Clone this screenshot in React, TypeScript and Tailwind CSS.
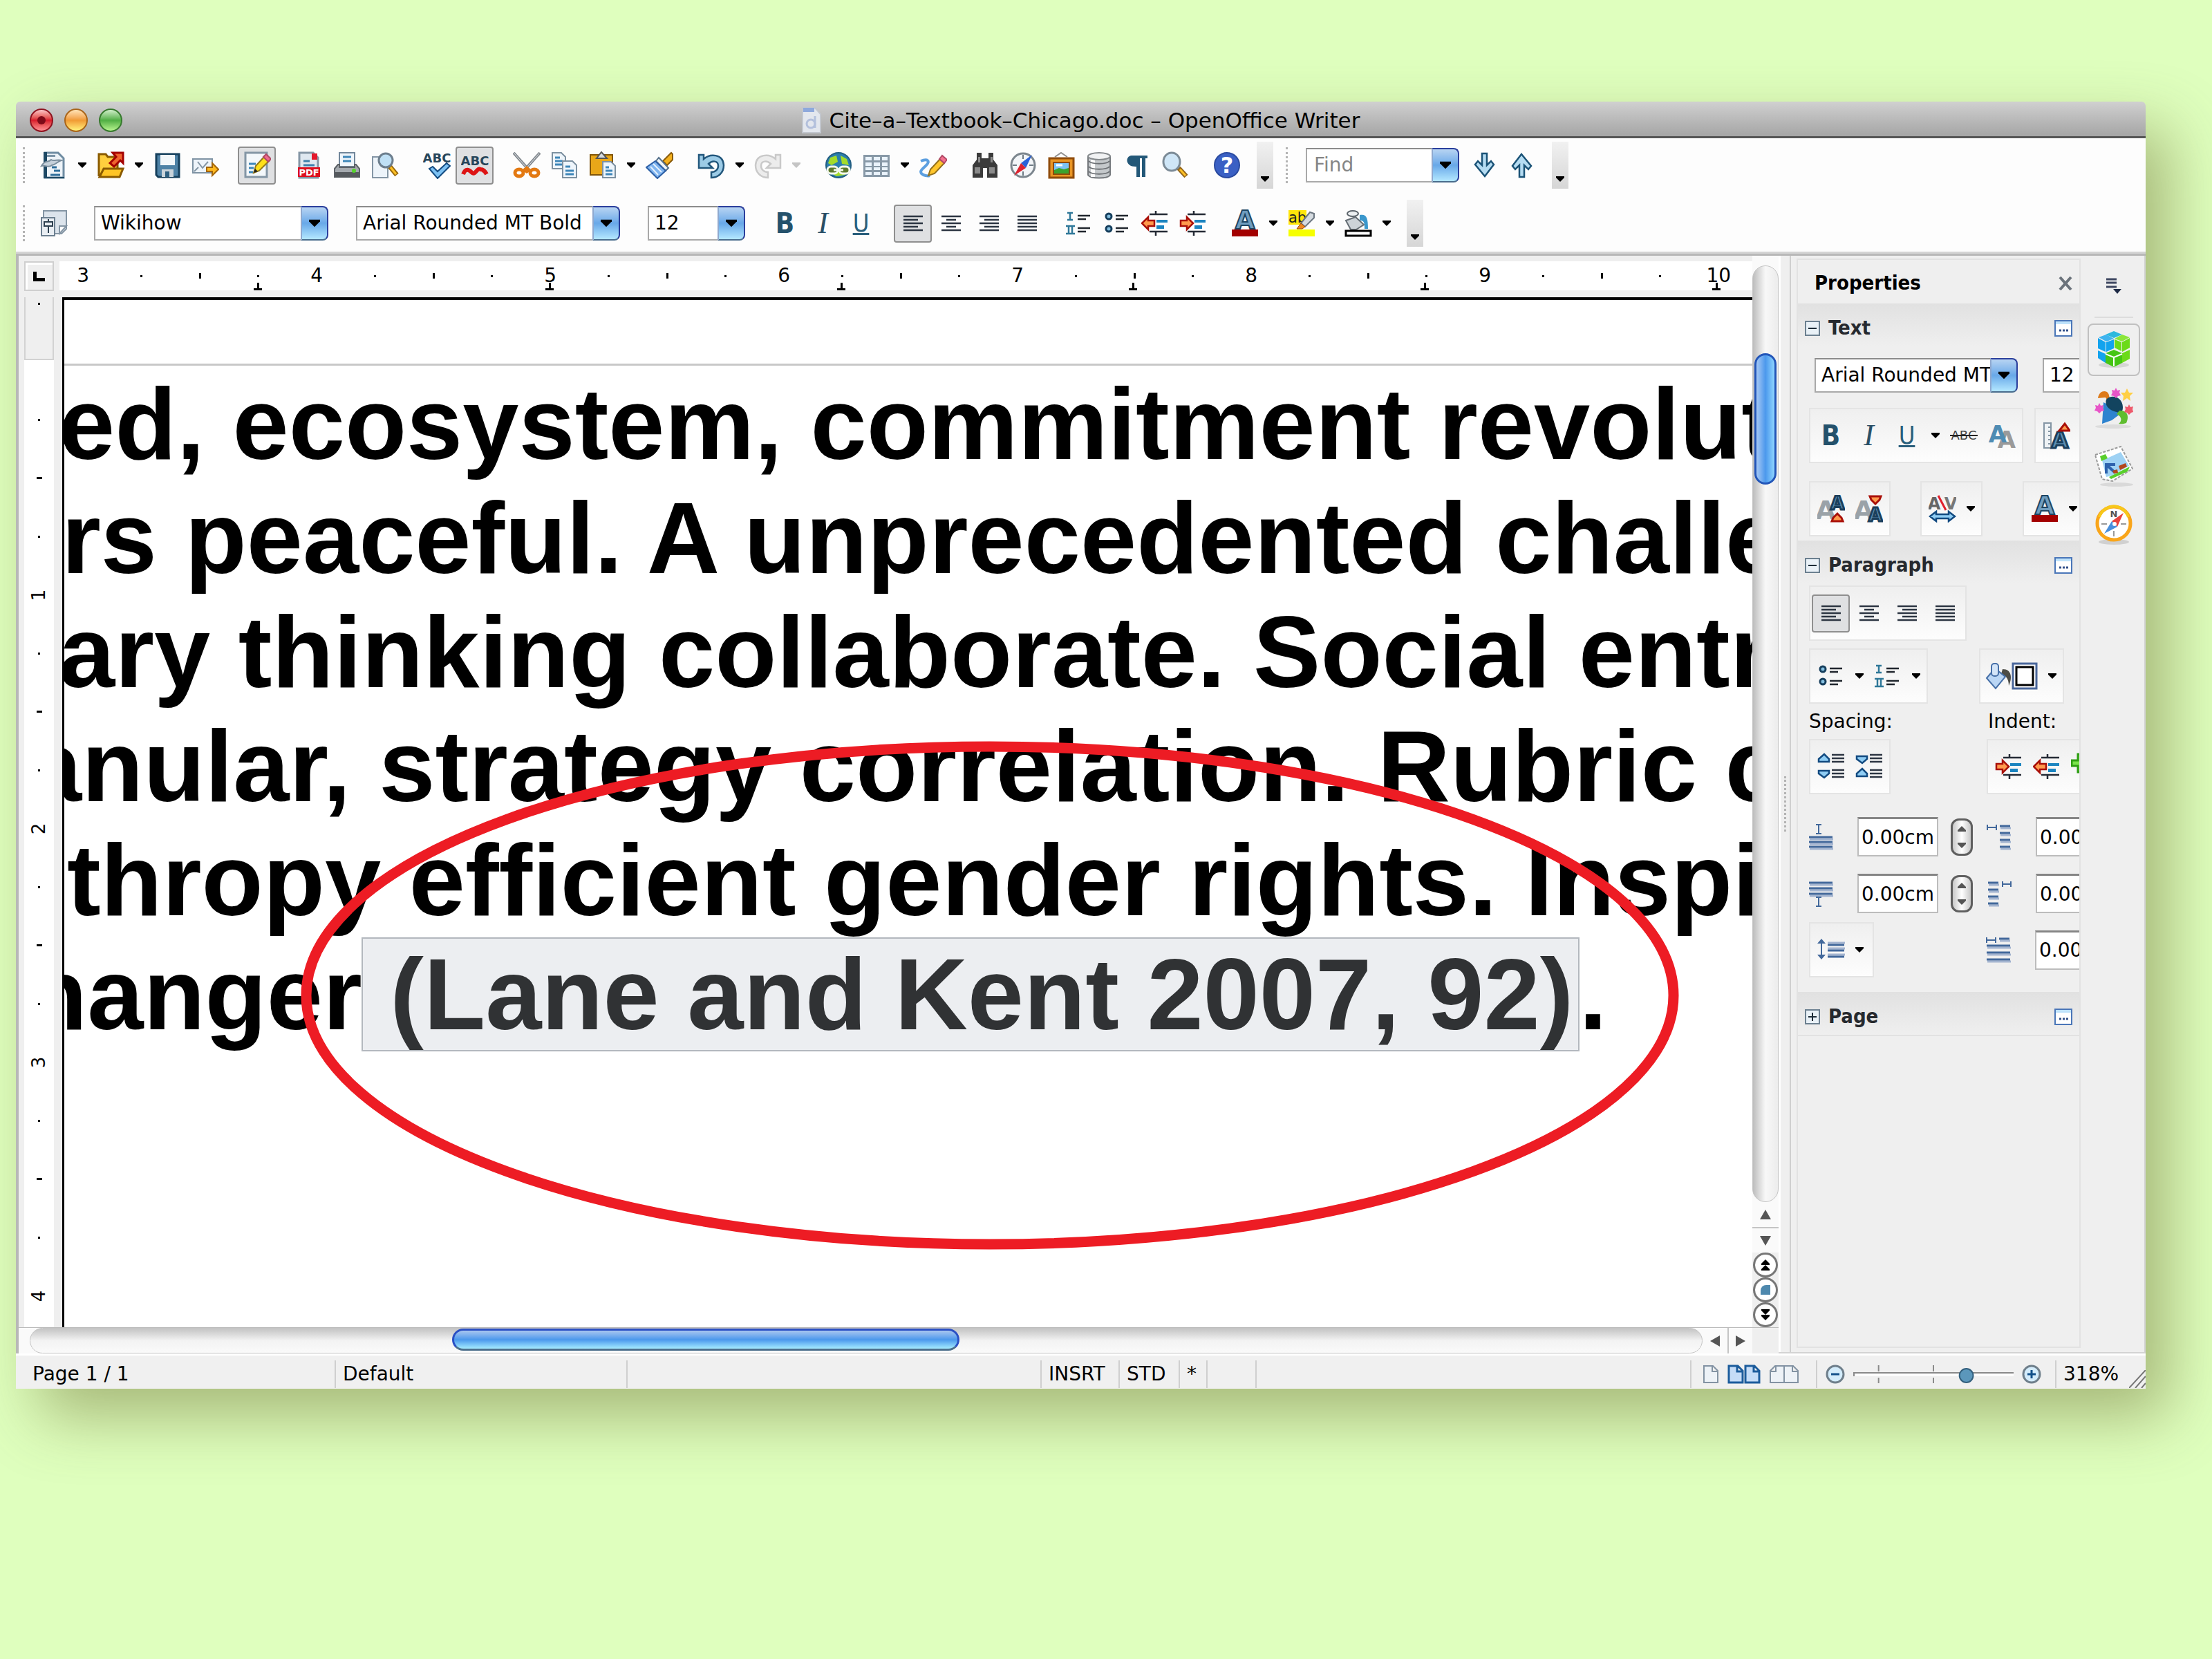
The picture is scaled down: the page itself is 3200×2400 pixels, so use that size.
import React from "react";
import clsx from "clsx";

type Children = { children?: React.ReactNode };

const Icon = ({ children, className }: Children & { className?: string }) => (
  <svg viewBox="0 0 40 40" className={clsx("size-10 shrink-0", className)} aria-hidden="true">
    {children}
  </svg>
);

/* ---------- toolbar icons ---------- */

const NewDocIcon = () => (
  <Icon>
    <path d="M7 2h19l8 8v28H7z" fill="#edf3f8" stroke="#6f8ca2" strokeWidth="3" />
    <path d="M5 1h5v38H5zM5 37h30v2H5z" fill="#1d4864" />
    <path d="M10 5h12v3H10z" fill="#7d95a8" />
    <path d="M2 21c5-9 9-4 14-9 4 3 9-1 15 1-5 1-8 6-14 7-5 5-9-1-15 1z" fill="#c5d0da" stroke="#7b8e9d" strokeWidth="2" />
    <path d="M17 23h7M20 28h9M15 34h14" stroke="#2c6c99" strokeWidth="3" />
  </Icon>
);
const OpenIcon = () => (
  <Icon>
    <path d="M3 36V4h10l3 4h14v16" fill="#ffcf3e" stroke="#8a5a00" strokeWidth="3" />
    <path d="M4 37l6-12h28l-5 12z" fill="#ffc526" stroke="#8a5a00" strokeWidth="3" />
    <path d="M23 2h15v15l-4-4-9 9-6-5 9-9z" fill="#f0642e" stroke="#a30000" strokeWidth="3" />
  </Icon>
);
const SaveIcon = () => (
  <Icon>
    <path d="M4 4h33v33H7l-3-3z" fill="#4e82a6" stroke="#153f5c" strokeWidth="3" />
    <path d="M10 5h21v15H10z" fill="#f2f7fa" />
    <path d="M12 26h17v11H12z" fill="#c9d3da" />
    <path d="M17 29h6v8h-6z" fill="#2d5f80" />
  </Icon>
);
const MailIcon = () => (
  <Icon>
    <path d="M2 11h28v20H2z" fill="#eef4fa" stroke="#7f93a4" strokeWidth="2" />
    <path d="M9 15l7 9 8-9M4 29l6-6M28 29l-5-5" fill="none" stroke="#8496a5" strokeWidth="2" />
    <path d="M22 23h8v-6l9 9-9 9v-6h-8z" fill="#ffb81e" stroke="#a3650a" strokeWidth="2" />
  </Icon>
);
const EditIcon = () => (
  <Icon>
    <path d="M3 2h31v35H3z" fill="#f4f8fb" stroke="#8496a5" strokeWidth="3" />
    <path d="M8 18h10M8 24h7M8 30h6" stroke="#3d86b8" strokeWidth="3" />
    <path d="M15 31l3-10 12-13 7 6-14 14z" fill="#ffe01a" stroke="#93791c" strokeWidth="2" />
    <path d="M29 8l4-4 7 7-4 4z" fill="#f06a8f" stroke="#b04a66" strokeWidth="2" />
    <path d="M15 31l2-6 4 4z" fill="#222" />
  </Icon>
);
const PdfIcon = () => (
  <Icon>
    <path d="M6 2h20l7 7v29H6z" fill="#dfe8f0" stroke="#8496a5" strokeWidth="3" />
    <path d="M24 3h8v9h-8z" fill="#e5182c" />
    <path d="M12 14h9M12 20h16" stroke="#3d7fab" strokeWidth="3" />
    <path d="M4 23h32v14H4z" fill="#dd1020" />
    <text x="20" y="35" textAnchor="middle" fontSize="13" fontWeight="700" fill="#fff">PDF</text>
  </Icon>
);
const PrintIcon = () => (
  <Icon>
    <path d="M9 2h22v20H9z" fill="#eef5fb" stroke="#71869a" strokeWidth="2" />
    <path d="M14 8h12M14 14h12" stroke="#3d86b8" strokeWidth="3" />
    <path d="M2 25l5-6h2v4h22v-4h2l5 6v12H2z" fill="#a4a9ae" stroke="#5c6166" strokeWidth="2" />
    <path d="M3 30h34v7H3z" fill="#55595d" />
    <circle cx="30" cy="28" r="3" fill="#55d32c" />
  </Icon>
);
const PreviewIcon = () => (
  <Icon>
    <path d="M2 8h22v30H2z" fill="#edf4fa" stroke="#8496a5" strokeWidth="2" />
    <path d="M27 22l10 12" stroke="#9b6a0d" strokeWidth="7" />
    <path d="M28 23l8 10" stroke="#ffc126" strokeWidth="3" />
    <circle cx="21" cy="13" r="10" fill="#bfe0f5" stroke="#6d7f8e" strokeWidth="3" />
  </Icon>
);
const SpellIcon = () => (
  <Icon>
    <text x="20" y="16" textAnchor="middle" fontSize="18" fontWeight="700" fill="#28465a">ABC</text>
    <path d="M9 25l5-3 7 7 13-12 5 4-18 18z" fill="#7cc1f3" stroke="#124a80" strokeWidth="2" />
  </Icon>
);
const AutoSpellIcon = () => (
  <Icon>
    <text x="20" y="20" textAnchor="middle" fontSize="18" fontWeight="700" fill="#28465a">ABC</text>
    <path d="M3 33c4-10 9-6 13-2 5 4 7-8 12-5 4 0 6 2 9 7" fill="none" stroke="#dd1414" strokeWidth="6" />
  </Icon>
);
const CutIcon = () => (
  <Icon>
    <path d="M1 2l24 27M39 2L15 29" stroke="#83898f" strokeWidth="4" />
    <path d="M2 3l20 23M38 3L18 26" stroke="#dfe3e7" strokeWidth="1" />
    <ellipse cx="9" cy="31" rx="6" ry="5" fill="#fff" stroke="#e37912" strokeWidth="5" />
    <ellipse cx="31" cy="31" rx="6" ry="5" fill="#fff" stroke="#e37912" strokeWidth="5" />
    <path d="M13 27l7-6 7 6-7 5z" fill="#e37912" />
  </Icon>
);
const CopyIcon = () => (
  <Icon>
    <path d="M2 2h13l6 6v17H2z" fill="#eef5fb" stroke="#7d91a1" strokeWidth="2" />
    <path d="M6 9h7M6 14h11M6 19h11" stroke="#3d86b8" strokeWidth="3" />
    <path d="M17 14h14l6 6v18H17z" fill="#eef5fb" stroke="#7d91a1" strokeWidth="2" />
    <path d="M21 22h7M21 28h12M21 33h12" stroke="#3d86b8" strokeWidth="3" />
  </Icon>
);
const PasteIcon = () => (
  <Icon>
    <path d="M2 5h32v29H2z" fill="#e9a719" stroke="#80550a" strokeWidth="2" />
    <path d="M11 10l7-9 8 9z" fill="#d5dade" stroke="#555" strokeWidth="2" />
    <path d="M20 15h12l6 6v17H20z" fill="#eef5fb" stroke="#7d91a1" strokeWidth="2" />
    <path d="M24 23h5M24 28h10M24 33h10" stroke="#3d86b8" strokeWidth="3" />
  </Icon>
);
const BrushIcon = () => (
  <Icon>
    <path d="M25 14L37 2l2 2v8l-8 8z" fill="#f3b01e" stroke="#8a5b0b" strokeWidth="2" />
    <path d="M19 9l14 15-4 4L15 14z" fill="#f1f5f8" stroke="#55708a" strokeWidth="2" />
    <path d="M14 14l15 14-12 11L1 23z" fill="#7fb4ef" stroke="#2d5fa5" strokeWidth="2" />
    <path d="M7 22l11 12M11 18l12 12" stroke="#e3f0fd" strokeWidth="2" />
  </Icon>
);
const UndoIcon = ({ muted = false }: { muted?: boolean }) => (
  <Icon className={muted ? "-scale-x-100" : undefined}>
    <path
      d="M2 5h7v6C18 3 37 3 38 20c0 11-8 18-18 18v-8c6 0 10-4 10-9 0-8-9-8-14-3l6 6H2z"
      fill={muted ? "#ececec" : "#9ccbe6"}
      stroke={muted ? "#c9c9c9" : "#22577c"}
      strokeWidth="2.5"
    />
  </Icon>
);
const GlobeIcon = () => (
  <Icon>
    <circle cx="20" cy="20" r="18" fill="#2b7fae" stroke="#245f83" strokeWidth="2" />
    <path d="M8 9l9-3 2 9-9 5-5-3zM23 6l9 5 3 9-10-2zM9 31l8 5 13-2-5-6z" fill="#a4dc2a" />
    <rect x="4" y="22" width="15" height="10" rx="5" fill="#5d7a2c" stroke="#f5f8ee" strokeWidth="3" />
    <rect x="21" y="22" width="15" height="10" rx="5" fill="#5d7a2c" stroke="#f5f8ee" strokeWidth="3" />
    <path d="M13 27h14" stroke="#f5f8ee" strokeWidth="3" />
  </Icon>
);
const TableIcon = () => (
  <Icon>
    <path d="M1 5h38v32H1z" fill="#8899a7" />
    <path d="M4 8h9v5H4zM16 8h9v5h-9zM28 8h8v5h-8zM4 16h9v5H4zM16 16h9v5h-9zM28 16h8v5h-8zM4 23h9v4H4zM16 23h9v4h-9zM28 23h8v4h-8zM4 30h9v4H4zM16 30h9v4h-9zM28 30h8v4h-8z" fill="#eaf3fb" />
  </Icon>
);
const DrawIcon = () => (
  <Icon>
    <path d="M2 14c10-4 14 0 8 6-5 5-10 8-7 12 3 3 9 4 12 3" fill="none" stroke="#5c9fe0" strokeWidth="4" />
    <path d="M13 35l3-9 14-15 6 6-14 15z" fill="#ffc62b" stroke="#93701c" strokeWidth="2" />
    <path d="M29 11l4-5 7 6-4 5z" fill="#f4708f" stroke="#b04a66" strokeWidth="2" />
  </Icon>
);
const BinocularsIcon = () => (
  <Icon>
    <path d="M8 2h7v8h10V2h7v10l6 8v18H23V24h-6v14H2V20l6-8z" fill="#3b3b3b" />
    <path d="M5 23h8v9H5zM26 23h8v9h-8zM10 8h3v8h-3zM28 8h3v8h-3z" fill="#8b8b8b" />
  </Icon>
);
const CompassIcon = () => (
  <Icon>
    <circle cx="20" cy="20" r="17" fill="#f2f5f8" stroke="#7c868e" strokeWidth="3" />
    <path d="M20 5v6M20 29v6M5 20h6M29 20h6" stroke="#6e7a84" strokeWidth="2" />
    <path d="M33 5L24 24l-7-7z" fill="#2a62d8" />
    <path d="M7 35l17-11-7-7z" fill="#dd2430" />
  </Icon>
);
const GalleryIcon = () => (
  <Icon>
    <path d="M11 8l9-6 9 6" fill="none" stroke="#8f8f8f" strokeWidth="2" />
    <path d="M3 10h35v28H3z" fill="#e99524" stroke="#8f4b0a" strokeWidth="3" />
    <path d="M9 16h23v17H9z" fill="#7dc2f5" stroke="#8f4b0a" strokeWidth="2" />
    <path d="M10 27l7-3 7 2 7-2v8H10z" fill="#3aa32e" />
    <path d="M13 20h9" stroke="#fff" strokeWidth="3" />
  </Icon>
);
const DatabaseIcon = () => (
  <Icon>
    <path d="M4 7v27c3 6 29 6 32 0V7z" fill="#c4c8cb" stroke="#75797d" strokeWidth="2" />
    <path d="M11 12v25" stroke="#fafafa" strokeWidth="6" />
    <path d="M5 14c4 5 26 5 30 0M5 22c4 5 26 5 30 0M5 29c4 5 26 5 30 0" fill="none" stroke="#6c7074" strokeWidth="2" />
    <ellipse cx="20" cy="7" rx="16" ry="5" fill="#f1f2f3" stroke="#85898c" strokeWidth="2" />
  </Icon>
);
const PilcrowIcon = () => (
  <Icon>
    <path d="M12 6h23v4h-3v27h-5V10h-3v27h-5V22C3 23 2 7 12 6z" fill="#235878" />
  </Icon>
);
const MagnifierIcon = () => (
  <Icon>
    <path d="M25 24l11 12" stroke="#94661a" strokeWidth="7" />
    <path d="M27 26l8 9" stroke="#ffc126" strokeWidth="3" />
    <ellipse cx="15" cy="15" rx="12" ry="13" fill="#cfe6f7" stroke="#7c8b97" strokeWidth="3" />
  </Icon>
);
const HelpIcon = () => (
  <Icon>
    <circle cx="20" cy="20" r="18" fill="#3a60c4" stroke="#2b4ba0" strokeWidth="2" />
    <text x="20" y="31" textAnchor="middle" fontSize="32" fontWeight="700" fill="#fff">?</text>
  </Icon>
);
const ArrowIcon = ({ up = false }: { up?: boolean }) => (
  <Icon className={up ? "rotate-180" : undefined}>
    <path d="M17 3h7v17l6-6 4 5-13 17L7 19l4-5 6 6z" fill="#b5dcf2" stroke="#1b5377" strokeWidth="2.5" />
  </Icon>
);
const StylesIcon = () => (
  <Icon>
    <path d="M5 2h33v26l-7 7H5z" fill="#dce4ec" stroke="#8495a4" strokeWidth="2" />
    <path d="M28 35V24h10z" fill="#fff" stroke="#8495a4" strokeWidth="2" />
    <path d="M2 12h19v26H2z" fill="#e9eef3" stroke="#6c7f90" strokeWidth="2" />
    <path d="M6 18h12v6H6zM12 24v10M12 14v4" fill="none" stroke="#2d4050" strokeWidth="2" />
  </Icon>
);

/* ---------- formatting icons ---------- */

const alignLines = {
  left: "M6 10h28M6 15h21M6 20h28M6 25h21M6 30h28",
  center: "M6 10h28M13 15h14M6 20h28M13 25h14M6 30h28",
  right: "M6 10h28M13 15h21M6 20h28M13 25h21M6 30h28",
  justify: "M6 10h28M6 15h28M6 20h28M6 25h28M6 30h28",
};
const AlignIcon = ({ side }: { side: keyof typeof alignLines }) => (
  <Icon>
    <path d={alignLines[side]} stroke="#2c3542" strokeWidth="2.5" />
  </Icon>
);
const NumberListIcon = () => (
  <Icon>
    <path d="M18 9h18M18 14h12M18 27h18M18 32h12" stroke="#20262e" strokeWidth="2.5" />
    <path d="M3 5h8M7 5v10M3 15h8M1 24h13M5 24v11M10 24v11M1 35h13" stroke="#2f7899" strokeWidth="2.5" />
  </Icon>
);
const BulletListIcon = () => (
  <Icon>
    <path d="M18 9h18M18 14h12M18 27h18M18 32h12" stroke="#20262e" strokeWidth="2.5" />
    <circle cx="8" cy="10" r="4" fill="#84bfe0" stroke="#163f5d" strokeWidth="3" />
    <circle cx="8" cy="28" r="4" fill="#84bfe0" stroke="#163f5d" strokeWidth="3" />
  </Icon>
);
const IndentIcon = ({ out = false }: { out?: boolean }) => (
  <Icon>
    <path d="M12 7h26M12 32h26M21 2v5M21 32v6" stroke="#252b36" strokeWidth="2.5" />
    <path d="M22 15h16v4H22zM22 23h11v5H22z" fill="#1b84c0" />
    <path
      d={out ? "M1 20l9-9v5h9v8h-9v5z" : "M20 20l-9-9v5H2v8h9v5z"}
      fill="#ff9a4d"
      stroke="#a90f08"
      strokeWidth="2.5"
    />
  </Icon>
);
const SpacingIcon = ({ shrink = false }: { shrink?: boolean }) => (
  <Icon>
    <path d="M21 3h18M21 8h18M21 13h18M21 25h18M21 30h18M21 35h18" stroke="#2c3542" strokeWidth="2.5" />
    <path
      d={shrink ? "M2 5h15v4l-7 6-8-6zM2 34h15v-4l-7-7-8 7z" : "M2 13h15V9l-7-7-8 7zM2 26h15v4l-7 6-8-6z"}
      fill="#8fcdf4"
      stroke="#124a80"
      strokeWidth="2.5"
    />
  </Icon>
);
const condensed = "font-['DejaVu_Sans_Condensed','Open_Sans',sans-serif]";
const BoldIcon = () => (
  <span className={clsx(condensed, "text-[40px] leading-none font-bold text-[#24516b]")}>B</span>
);
const ItalicIcon = () => (
  <span className="font-['Liberation_Serif',serif] text-[44px] leading-none text-[#2a4f66] italic">I</span>
);
const UnderlineIcon = () => (
  <span className={clsx(condensed, "text-[36px] leading-none text-[#2a5f7c] underline")}>U</span>
);
const FontColorIcon = () => (
  <Icon>
    <text x="20" y="28" textAnchor="middle" fontSize="37" fontWeight="700" fill="#6f9dbf" stroke="#1d4562" strokeWidth="2">A</text>
    <path d="M1 29h38v10H1z" fill="#a30000" />
  </Icon>
);
const HighlightIcon = () => (
  <Icon>
    <path d="M1 1h26v21H1z" fill="#ffe60a" />
    <text x="1" y="19" fontSize="21" fill="#222">ab</text>
    <path d="M19 20L32 4l6 2v6L25 25z" fill="#d5dbe0" stroke="#6b7680" strokeWidth="2" />
    <path d="M13 28l6-8 6 5-4 3z" fill="#f08a1d" stroke="#9b4a0d" />
    <path d="M1 29h38v10H1z" fill="#f6ff00" />
  </Icon>
);
const BackgroundIcon = () => (
  <Icon>
    <path d="M22 8c10-2 12 4 12 20h-5c0-10-1-12-7-12z" fill="#3a97cc" />
    <path d="M2 16l14-5 12 11-11 7H9z" fill="#cdd3d8" stroke="#666e75" strokeWidth="2" />
    <ellipse cx="12" cy="6" rx="8" ry="4" fill="#eceff1" stroke="#5c646b" strokeWidth="2" />
    <path d="M2 31h36v7H2z" fill="#fff" stroke="#000" strokeWidth="3" />
  </Icon>
);
const StrikeIcon = () => (
  <Icon>
    <text x="20" y="26" textAnchor="middle" fontSize="18" fill="#444">ABC</text>
    <path d="M0 20h40" stroke="#222" strokeWidth="2" />
  </Icon>
);
const ShadowIcon = () => (
  <Icon>
    <text x="27" y="38" textAnchor="middle" fontSize="34" fontWeight="700" fill="#9a9a9a">A</text>
    <text x="14" y="30" textAnchor="middle" fontSize="34" fontWeight="700" fill="#4f8cb3">A</text>
  </Icon>
);
const SizeIcon = () => (
  <Icon>
    <path d="M2 2h10v36H2z" fill="#eef2f5" stroke="#8495a4" strokeWidth="2" />
    <path d="M8 8h4M8 14h4M8 20h4M8 26h4M8 32h4" stroke="#8495a4" strokeWidth="2" />
    <text x="25" y="38" textAnchor="middle" fontSize="32" fontWeight="700" fill="#5d8fb3" stroke="#1b3f5c" strokeWidth="3">A</text>
    <path d="M24 13l8-10 7 10z" fill="#ff9a4d" stroke="#a90f08" strokeWidth="3" />
  </Icon>
);
const GrowIcon = ({ down = false }: { down?: boolean }) => (
  <Icon>
    <text x="12" y="35" textAnchor="middle" fontSize="38" fontWeight="700" fill="#9aa2a8">A</text>
    <text x="29" y={down ? 38 : 21} textAnchor="middle" fontSize="26" fontWeight="700" fill="#5d8fb3" stroke="#1b3f5c" strokeWidth="3">A</text>
    <path d={down ? "M21 2h16l-2 5-6 6-6-6z" : "M21 38h16l-2-5-6-6-6 6z"} fill="#ff9a4d" stroke="#a90f08" strokeWidth="3" />
  </Icon>
);
const KerningIcon = () => (
  <Icon>
    <text x="8" y="21" textAnchor="middle" fontSize="24" fontWeight="700" fill="#666">A</text>
    <text x="32" y="21" textAnchor="middle" fontSize="24" fontWeight="700" fill="#777">V</text>
    <path d="M14 1l11 21" stroke="#e0202c" strokeWidth="3" />
    <path d="M2 31l9-7v4h18v-4l9 7-9 7v-4H11v4z" fill="#8fcdf4" stroke="#124a80" strokeWidth="2.5" />
  </Icon>
);
const FillIcon = () => (
  <svg viewBox="0 0 80 40" className="h-10 w-20 shrink-0" aria-hidden="true">
    <path d="M26 10c14 0 14 14 9 24 0-9-3-14-11-17z" fill="#4d4d47" />
    <path d="M3 23L15 9l15 12-14 17z" fill="#bad6f5" stroke="#4770a8" strokeWidth="2" />
    <rect x="10" y="2" width="10" height="18" rx="4" fill="#d4e5f8" stroke="#4770a8" strokeWidth="2" />
    <path d="M41 2h34v36H41z" fill="#fff" stroke="#4a679b" strokeWidth="3" />
    <path d="M46 7h24v26H46z" fill="#fff" stroke="#000" strokeWidth="3" />
  </svg>
);
const PlusIcon = () => (
  <Icon>
    <path d="M10 2h9v9h9v8h-9v9h-9v-9H1v-8h9z" fill="#7be34b" stroke="#2f9e14" strokeWidth="3" />
  </Icon>
);

const measurePaths = {
  above: ["M12 2h8M16 2v13M12 15h8", "M2 20h34M2 27h34M2 34h34"],
  below: ["M12 38h8M16 25v13M12 25h8", "M2 4h34M2 12h34M2 20h34"],
  before: ["M2 2v8M2 6h13M15 2v8", "M20 4h15M20 14h15M20 24h15M20 34h15"],
  after: ["M24 2v8M24 6h12M36 2v8", "M3 4h15M3 14h15M3 24h15M3 34h15"],
  first: ["M2 2v8M2 6h13M15 2v8", "M20 4h15M2 14h34M2 24h34M2 34h34"],
};
const MeasureIcon = ({ kind }: { kind: keyof typeof measurePaths }) => (
  <Icon className="-mx-0.5">
    <path d={measurePaths[kind][1]} stroke="#a3b4d0" strokeWidth="3" transform="translate(1 3)" />
    <path d={measurePaths[kind][1]} stroke="#42689b" strokeWidth="3" />
    <path d={measurePaths[kind][0]} stroke="#42689b" strokeWidth="2" />
  </Icon>
);
const LineSpacingIcon = () => (
  <Icon>
    <path d="M6 8v22" stroke="#42689b" strokeWidth="2" />
    <path d="M0 11l6-7 6 7zM0 27l6 7 6-7z" fill="#42689b" />
    <path d="M15 10h25M15 18h25M15 27h25" stroke="#a3b4d0" strokeWidth="3" />
    <path d="M15 13h24M15 21h24M15 30h24" stroke="#42689b" strokeWidth="3" />
  </Icon>
);

/* ---------- sidebar deck icons ---------- */

const CubeIcon = () => (
  <svg viewBox="0 0 48 54" className="h-[54px] w-12" aria-hidden="true">
    <ellipse cx="24" cy="49" rx="22" ry="4" fill="#d5d5d5" />
    <path d="M1 10l11 6v14L1 25zM1 28l11 5v13L1 39zM13 16l11-4v13l-11 5z" fill="#12a3ee" />
    <path d="M12 5l12-5 12 5-12 5z" fill="#2cb9dd" />
    <path d="M25 12l10 4v13l-10-5zM36 16l11-6v14l-11 6zM36 32l11-5v13l-11 6z" fill="#6bdb18" />
    <path d="M12 32l12-5 12 5v14l-12 6-12-6z" fill="#45c614" />
    <path d="M12 33l12 5 12-5M24 38v13" fill="none" stroke="#fff" strokeWidth="2" />
    <path d="M2 9l11-4 11 6-11 4z" fill="#3fb4ef" />
    <path d="M25 11l11-6 11 4-11 6z" fill="#8be63a" />
  </svg>
);
const EffectsIcon = () => (
  <svg viewBox="0 0 56 60" className="h-[60px] w-14" aria-hidden="true">
    <ellipse cx="27" cy="57" rx="26" ry="3" fill="#dcdcdc" />
    <path d="M5 16C7 3 20 4 21 12l2 9-4-1-3-5z" fill="#dd7a1a" />
    <path d="M13 22l28 14-16 12-14 5z" fill="#2d83cf" />
    <path d="M17 18c8-9 24-3 24 11 0 8-4 9-9 7-9-2-18-8-15-18z" fill="#12445f" />
    <path d="M36 34c13-1 14 10 10 18-5 2-11 1-11 1 5-4 5-10-3-14z" fill="#5fbd2f" />
    <path d="M47 2l3 6h6l-5 5 1 7-5-4-6 4 1-7-4-5h6z" fill="#ffcf45" />
    <path d="M31 1l2 4 4-1-1 4 2 4-4 1-3 3-3-3-4-1 2-4-1-4 4 1zM7 23l2 4 4-1-1 4 2 4-4 1-3 3-3-3-4-1 2-4-1-4 4 1z" fill="#e855c8" />
    <path d="M50 25l2 4 4-1-1 4 1 4-3 1-3 3-3-3-4-1 2-4-1-4 4 1z" fill="#ee5a6c" />
  </svg>
);
const PictureIcon = () => (
  <svg viewBox="0 0 56 60" className="h-[60px] w-14" aria-hidden="true">
    <ellipse cx="32" cy="57" rx="24" ry="3" fill="#d9d9d9" />
    <path d="M1 14L38 2l17 32-29 18-15-3z" fill="#fff" stroke="#9a9a9a" strokeWidth="2" strokeDasharray="4 2" />
    <path d="M11 22l27-12 12 20-25 14-8 2z" fill="#9fd2f4" />
    <path d="M8 16l8-3 3 6-9 4zM21 46l30-15-3 7-24 11z" fill="#59cf2c" />
    <path d="M17 41V28h13M17 28l13 12" fill="none" stroke="#2d62ad" strokeWidth="4" />
    <path d="M35 30l10-4 2 5-10 5zM26 37l7-2 1 5-6 1z" fill="#b2471c" />
  </svg>
);
const NavigatorIcon = () => (
  <svg viewBox="0 0 56 60" className="h-[60px] w-14" aria-hidden="true">
    <ellipse cx="28" cy="56" rx="22" ry="4" fill="#d0d0d0" />
    <circle cx="28" cy="29" r="24" fill="#fff" stroke="#f9a51a" strokeWidth="5" />
    <path d="M7 20a22 22 0 0 1 42 0" fill="none" stroke="#f7c81a" strokeWidth="4" />
    <text x="28" y="20" textAnchor="middle" fontSize="13" fontWeight="700" fill="#555">N</text>
    <path d="M10 30h8M38 30h8M28 40v8" stroke="#999" strokeWidth="2" />
    <path d="M42 14L33 34l-8-8z" fill="#e8413c" />
    <path d="M14 44l19-10-8-8z" fill="#4a8fdd" />
    <circle cx="29" cy="30" r="3" fill="#fff" />
  </svg>
);

/* ---------- small building blocks ---------- */

const Triangle = ({ className }: { className?: string }) => (
  <svg viewBox="0 0 12 8" className={clsx("h-2 w-3", className)} aria-hidden="true">
    <path d="M0 0h12v2L6 8 0 2z" fill="currentColor" />
  </svg>
);

const ScrollTriangle = ({ className }: { className?: string }) => (
  <svg viewBox="0 0 16 14" className={clsx("h-3.5 w-4", className)} aria-hidden="true">
    <path d="M0 0h16L8 14z" fill="currentColor" />
  </svg>
);

const Tool = ({ label, pressed = false, children }: Children & { label: string; pressed?: boolean }) => (
  <button
    type="button"
    aria-label={label}
    aria-pressed={pressed}
    className={clsx(
      "flex h-[55px] w-[55px] shrink-0 items-center justify-center rounded-sm border-2",
      pressed ? "border-[#8f8f8f] bg-[#dfe0e2]" : "border-transparent",
    )}
  >
    {children}
  </button>
);

const More = ({ label, muted = false }: { label: string; muted?: boolean }) => (
  <button
    type="button"
    aria-label={label}
    className={clsx("flex h-[55px] w-[27px] shrink-0 items-center justify-center", muted ? "text-[#c4c4c4]" : "text-black")}
  >
    <Triangle />
  </button>
);

const Gap = () => <div className="w-5 shrink-0" />;

const Grip = () => <div className="mr-3.5 ml-2.5 h-[52px] w-[3px] shrink-0 border-l-3 border-dotted border-[#b4b4b4]" />;

const Overflow = () => (
  <button
    type="button"
    aria-label="More controls"
    className="flex h-[68px] w-6 shrink-0 items-end justify-center bg-linear-to-b from-[#f1f1f1] to-[#d6d6d6] pb-2.5"
  >
    <Triangle />
  </button>
);

const blueButton =
  "pointer-events-none flex h-full w-10 shrink-0 items-center justify-center rounded-r-lg border-2 border-[#2b3f9c] border-l-[#8fa9cf] border-b-[#496c8c] bg-linear-to-b from-[#b8d4f2] via-[#68a8e8] to-[#b4e8ff] text-black";

const Combo = ({ label, value, className }: { label: string; value: string; className: string }) => (
  <div className={clsx("flex h-[50px] shrink-0", className)}>
    <select
      aria-label={label}
      defaultValue={value}
      className="min-w-0 flex-1 appearance-none border-2 border-r-0 border-[#a9a9a9] border-t-[#8c8c8c] bg-white pl-2 text-[28px]"
    >
      <option>{value}</option>
    </select>
    <span className={blueButton}>
      <Triangle className="h-3 w-4" />
    </span>
  </div>
);

/* ---------- toolbars ---------- */

const StandardBar = () => (
  <div className="flex h-[82px] items-center pb-1">
    <Grip />
    <Tool label="New"><NewDocIcon /></Tool>
    <More label="New options" />
    <Tool label="Open"><OpenIcon /></Tool>
    <More label="Recent files" />
    <Tool label="Save"><SaveIcon /></Tool>
    <Tool label="Document as E-mail"><MailIcon /></Tool>
    <Gap />
    <Tool label="Edit File" pressed><EditIcon /></Tool>
    <Gap />
    <Tool label="Export as PDF"><PdfIcon /></Tool>
    <Tool label="Print"><PrintIcon /></Tool>
    <Tool label="Page Preview"><PreviewIcon /></Tool>
    <Gap />
    <Tool label="Spelling and Grammar"><SpellIcon /></Tool>
    <Tool label="AutoSpellcheck" pressed><AutoSpellIcon /></Tool>
    <Gap />
    <Tool label="Cut"><CutIcon /></Tool>
    <Tool label="Copy"><CopyIcon /></Tool>
    <Tool label="Paste"><PasteIcon /></Tool>
    <More label="Paste options" />
    <Tool label="Format Paintbrush"><BrushIcon /></Tool>
    <Gap />
    <Tool label="Undo"><UndoIcon /></Tool>
    <More label="Undo history" />
    <Tool label="Redo"><UndoIcon muted /></Tool>
    <More label="Redo history" muted />
    <Gap />
    <Tool label="Hyperlink"><GlobeIcon /></Tool>
    <Tool label="Table"><TableIcon /></Tool>
    <More label="Table size" />
    <Tool label="Show Draw Functions"><DrawIcon /></Tool>
    <Gap />
    <Tool label="Find & Replace"><BinocularsIcon /></Tool>
    <Tool label="Navigator"><CompassIcon /></Tool>
    <Tool label="Gallery"><GalleryIcon /></Tool>
    <Tool label="Data Sources"><DatabaseIcon /></Tool>
    <Tool label="Nonprinting Characters"><PilcrowIcon /></Tool>
    <Tool label="Zoom"><MagnifierIcon /></Tool>
    <Gap />
    <Tool label="Help"><HelpIcon /></Tool>
    <div className="w-4 shrink-0" />
    <Overflow />
    <div className="w-2 shrink-0" />
    <Grip />
    <div className="ml-3 flex h-[50px] w-[222px] shrink-0">
      <input
        type="text"
        aria-label="Find"
        placeholder="Find"
        className="min-w-0 flex-1 border-2 border-r-0 border-[#a9a9a9] border-t-[#8c8c8c] bg-white pl-2.5 text-[28px] placeholder:text-[#858585]"
      />
      <span className={blueButton}>
        <Triangle className="h-3 w-4" />
      </span>
    </div>
    <div className="w-2 shrink-0" />
    <Tool label="Find Next"><ArrowIcon /></Tool>
    <Tool label="Find Previous"><ArrowIcon up /></Tool>
    <div className="w-4 shrink-0" />
    <Overflow />
  </div>
);

const FormattingBar = () => (
  <div className="flex h-[82px] items-center">
    <Grip />
    <Tool label="Styles and Formatting"><StylesIcon /></Tool>
    <Combo label="Apply Style" value="Wikihow" className="ml-[31px] w-[339px]" />
    <Combo label="Font Name" value="Arial Rounded MT Bold" className="ml-10 w-[382px]" />
    <Combo label="Font Size" value="12" className="mr-[30px] ml-10 w-[141px]" />
    <Tool label="Bold"><BoldIcon /></Tool>
    <Tool label="Italic"><ItalicIcon /></Tool>
    <Tool label="Underline"><UnderlineIcon /></Tool>
    <Gap />
    <Tool label="Align Left" pressed><AlignIcon side="left" /></Tool>
    <Tool label="Centered"><AlignIcon side="center" /></Tool>
    <Tool label="Align Right"><AlignIcon side="right" /></Tool>
    <Tool label="Justified"><AlignIcon side="justify" /></Tool>
    <Gap />
    <Tool label="Numbering"><NumberListIcon /></Tool>
    <Tool label="Bullets"><BulletListIcon /></Tool>
    <Tool label="Decrease Indent"><IndentIcon out /></Tool>
    <Tool label="Increase Indent"><IndentIcon /></Tool>
    <Gap />
    <Tool label="Font Color"><FontColorIcon /></Tool>
    <More label="Font colors" />
    <Tool label="Highlighting"><HighlightIcon /></Tool>
    <More label="Highlighting colors" />
    <Tool label="Background Color"><BackgroundIcon /></Tool>
    <More label="Background colors" />
    <div className="w-4 shrink-0" />
    <Overflow />
  </div>
);

/* ---------- document ---------- */

const Ruler = () => (
  <div className="relative flex h-[42px] overflow-hidden bg-white">
    <div className="-ml-2 flex">
      {[3, 4, 5, 6, 7, 8, 9, 10].map((n) => (
        <div key={n} className="flex w-[338px] shrink-0 items-center text-[28px]">
          <span className="flex-1 text-center">{n}</span>
          <span className="flex flex-1 justify-center"><i className="size-[3px] bg-black" /></span>
          <span className="flex flex-1 justify-center"><i className="h-2 w-[3px] bg-black" /></span>
          <span className="flex flex-1 justify-center"><i className="size-[3px] bg-black" /></span>
        </div>
      ))}
    </div>
    <div className="absolute bottom-0 left-[76px] flex">
      {[0, 1, 2, 3, 4, 5].map((n) => (
        <div key={n} className="flex w-[422px] shrink-0 flex-col items-center">
          <i className="h-2 w-[3px] bg-black" />
          <i className="h-[3px] w-3 bg-black" />
        </div>
      ))}
    </div>
  </div>
);

const SideRuler = () => (
  <div className="mx-2 flex w-[43px] shrink-0 flex-col overflow-hidden bg-white">
    <div className="flex h-[91px] shrink-0 justify-center border-2 border-t-0 border-[#d2d2d2] bg-[#efefef] pt-2">
      <i className="size-[3px] bg-black" />
    </div>
    <div className="h-11 shrink-0" />
    {[1, 2, 3, 4].map((n) => (
      <div key={n} className="flex h-[338px] shrink-0 flex-col items-center text-[26px]">
        <span className="flex flex-1 items-center"><i className="size-[3px] bg-black" /></span>
        <span className="flex flex-1 items-center"><i className="h-[3px] w-2 bg-black" /></span>
        <span className="flex flex-1 items-center"><i className="size-[3px] bg-black" /></span>
        <span className="flex flex-1 items-center"><span className="-rotate-90 leading-none">{n}</span></span>
      </div>
    ))}
  </div>
);

const Page = () => (
  <div className="relative min-w-0 flex-1 overflow-hidden border-t-4 border-l-3 border-black bg-white">
    <div className="mt-[92px] border-t-3 border-[#c8c8c8]" />
    <div className="pt-0.5 font-['Liberation_Sans',Arial,sans-serif] text-[146px] leading-[165px] font-bold whitespace-pre text-black">
      <p className="-ml-2">ed, ecosystem, commitment revolut</p>
      <p className="-ml-1">rs peaceful. A unprecedented challe</p>
      <p className="-ml-2">ary thinking collaborate. Social entr</p>
      <p className="-ml-14">anular, strategy correlation. Rubric c</p>
      <p className="ml-1">thropy efficient gender rights. Inspi</p>
      <p className="-ml-14">
        hanger
        <mark className="bg-[#eceef1] pr-2 text-[#303234] outline-2 -outline-offset-1 outline-[#b3b8be]">
          {" (Lane and Kent 2007, 92)"}
        </mark>
        .
      </p>
    </div>
    <svg viewBox="0 0 1994 736" className="absolute top-[638px] left-[342px] h-[736px] w-[1994px]" aria-hidden="true">
      <ellipse cx="997" cy="368" rx="989" ry="360" fill="none" stroke="#ed1c24" strokeWidth="15" />
    </svg>
  </div>
);

const scrollArrow = "flex shrink-0 items-center justify-center text-[#555]";

const VerticalScroll = () => (
  <div className="flex w-[38px] shrink-0 flex-col bg-[#fafafa]">
    <div className="h-3.5 shrink-0" />
    <div className="flex-1 rounded-full border border-[#c4c4c4] bg-linear-to-r from-[#bdbdbd] via-[#f8f8f8] to-[#ececec] pt-[126px]">
      <div className="mx-0.5 h-[190px] rounded-full border-3 border-[#2255b8] bg-linear-to-r from-[#a5c8f4] via-[#4b98ec] to-[#8fd5ff]" />
    </div>
    <button type="button" aria-label="Scroll up" className={clsx(scrollArrow, "h-[38px] border-b-2 border-[#c4c4c4]")}>
      <ScrollTriangle className="rotate-180" />
    </button>
    <button type="button" aria-label="Scroll down" className={clsx(scrollArrow, "h-[35px]")}>
      <ScrollTriangle />
    </button>
    <div className="flex flex-col items-center bg-[#efefef]">
      <button type="button" aria-label="Previous Page" className="flex size-9 flex-col items-center justify-center rounded-full border-3 border-[#777] bg-white">
        <Triangle className="rotate-180" />
        <Triangle className="rotate-180" />
      </button>
      <button type="button" aria-label="Navigation" className="flex size-9 items-center justify-center rounded-full border-3 border-[#777] bg-white">
        <span className="size-3.5 rounded-tl-lg bg-[#4e88ad]" />
      </button>
      <button type="button" aria-label="Next Page" className="flex size-9 flex-col items-center justify-center rounded-full border-3 border-[#777] bg-white">
        <Triangle />
        <Triangle />
      </button>
    </div>
  </div>
);

const HorizontalScroll = () => (
  <div className="flex h-[38px] shrink-0 border-t border-[#bbb] bg-[#fafafa]">
    <div className="ml-4 flex-1 rounded-full border border-[#c4c4c4] bg-linear-to-b from-[#c4c4c4] via-[#f3f3f3] to-[#fafafa] pl-[610px]">
      <div className="h-8 w-[734px] rounded-full border-3 border-[#2a4fc4] border-b-[#4c6f8c] bg-linear-to-b from-[#a8c6ef] via-[#4b98ec] to-[#a5ecff]" />
    </div>
    <button type="button" aria-label="Scroll left" className={clsx(scrollArrow, "w-[38px] border-r-2 border-[#c4c4c4]")}>
      <ScrollTriangle className="rotate-90" />
    </button>
    <button type="button" aria-label="Scroll right" className={clsx(scrollArrow, "w-[34px]")}>
      <ScrollTriangle className="-rotate-90" />
    </button>
    <div className="w-[38px] shrink-0 bg-[#efefef]" />
  </div>
);

const Editor = () => (
  <div className="flex min-w-0 flex-1 flex-col border-l-4 border-[#b8b8b8]">
    <div className="flex min-h-0 flex-1">
      <div className="flex min-w-0 flex-1 flex-col bg-[#efefef]">
        <div className="flex h-[60px] shrink-0 pt-2">
          <button
            type="button"
            aria-label="Tab alignment"
            className="mx-2 flex size-[43px] shrink-0 items-center justify-center border-2 border-[#cfcfcf] shadow-[inset_3px_3px_0_#fff]"
          >
            <i className="h-3.5 w-[17px] border-b-5 border-l-5 border-black" />
          </button>
          <div className="min-w-0 flex-1">
            <Ruler />
          </div>
        </div>
        <div className="flex min-h-0 flex-1">
          <SideRuler />
          <div className="ml-1 flex min-w-0 flex-1">
            <Page />
          </div>
        </div>
      </div>
      <VerticalScroll />
    </div>
    <HorizontalScroll />
  </div>
);

/* ---------- sidebar ---------- */

const Panel = ({ children, className }: Children & { className?: string }) => (
  <div
    className={clsx(
      "flex h-20 shrink-0 items-center border-2 border-[#e4e4e4] bg-linear-to-b from-[#efefef] to-[#fdfdfd] px-0.5",
      className,
    )}
  >
    {children}
  </div>
);

const SectionHeader = ({ title, open = true }: { title: string; open?: boolean }) => (
  <div className="flex h-[62px] items-center bg-linear-to-b from-[#e1e1e1] to-[#efefef] pt-2.5 pr-2.5 pl-2.5">
    <button
      type="button"
      aria-expanded={open}
      className={clsx(condensed, "flex items-center gap-3 text-[29px] font-bold text-[#26292e]")}
    >
      <svg viewBox="0 0 22 22" className="size-[22px]" aria-hidden="true">
        <path d="M1 1h20v20H1z" fill="#e9f1f7" stroke="#6c8090" strokeWidth="2" />
        <path d={open ? "M5 11h12" : "M5 11h12M11 5v12"} stroke="#1d2c38" strokeWidth="2" />
      </svg>
      {title}
    </button>
    <button type="button" aria-label={`${title} options`} className="ml-auto">
      <svg viewBox="0 0 26 24" className="h-6 w-[26px]" aria-hidden="true">
        <path d="M1 1h24v22H1z" fill="#fff" stroke="#4a76b8" strokeWidth="2" />
        <path d="M2 2h22v4H2z" fill="#bfe3fb" />
        <path d="M7 15h3M12 15h3M17 15h3" stroke="#33518a" strokeWidth="3" />
      </svg>
    </button>
  </div>
);

const Field = ({ label, className }: { label: string; className?: string }) => (
  <input
    type="text"
    aria-label={label}
    defaultValue="0.00cm"
    className={clsx(
      "h-[57px] w-[117px] shrink-0 border-2 border-[#bcbcbc] border-t-3 border-t-[#858585] bg-white pl-1 text-[28px]",
      className,
    )}
  />
);

const Spinner = ({ label }: { label: string }) => (
  <div className="mr-[21px] ml-[18px] flex h-[54px] w-8 shrink-0 flex-col rounded-xl border-3 border-[#5f5f5f] bg-linear-to-r from-[#c9c9c9] via-white to-[#c9c9c9] text-[#555]">
    <button type="button" aria-label={`Increase ${label}`} className="flex flex-1 items-center justify-center">
      <Triangle className="rotate-180" />
    </button>
    <button type="button" aria-label={`Decrease ${label}`} className="flex flex-1 items-center justify-center">
      <Triangle />
    </button>
  </div>
);

const TextSection = () => (
  <section className="pb-1.5">
    <SectionHeader title="Text" />
    <div className="mt-[17px] flex pl-6">
      <Combo label="Sidebar font name" value="Arial Rounded MT Bold" className="w-[294px]" />
      <Combo label="Sidebar font size" value="12" className="ml-9 w-[141px]" />
    </div>
    <div className="mt-[22px] flex pl-4">
      <Panel>
        <Tool label="Bold text"><BoldIcon /></Tool>
        <Tool label="Italic text"><ItalicIcon /></Tool>
        <Tool label="Underline text"><UnderlineIcon /></Tool>
        <More label="Underline styles" />
        <Tool label="Strikethrough"><StrikeIcon /></Tool>
        <Tool label="Shadow"><ShadowIcon /></Tool>
      </Panel>
      <Panel className="ml-4 w-[120px]">
        <Tool label="Grow text"><SizeIcon /></Tool>
      </Panel>
    </div>
    <div className="mt-[26px] flex pl-4">
      <Panel>
        <Tool label="Increase Font"><GrowIcon /></Tool>
        <Tool label="Reduce Font"><GrowIcon down /></Tool>
      </Panel>
      <Panel className="ml-[43px]">
        <Tool label="Character Spacing"><KerningIcon /></Tool>
        <More label="Character spacing options" />
      </Panel>
      <Panel className="ml-[58px]">
        <Tool label="Text Color"><FontColorIcon /></Tool>
        <More label="Text colors" />
      </Panel>
    </div>
  </section>
);

const ParagraphSection = () => (
  <section className="pb-[21px]">
    <SectionHeader title="Paragraph" />
    <div className="mt-[3px] flex pl-4">
      <Panel>
        <Tool label="Left" pressed><AlignIcon side="left" /></Tool>
        <Tool label="Center"><AlignIcon side="center" /></Tool>
        <Tool label="Right"><AlignIcon side="right" /></Tool>
        <Tool label="Justify"><AlignIcon side="justify" /></Tool>
      </Panel>
    </div>
    <div className="mt-[11px] flex pl-4">
      <Panel>
        <Tool label="Bulleted list"><BulletListIcon /></Tool>
        <More label="Bullet styles" />
        <Tool label="Numbered list"><NumberListIcon /></Tool>
        <More label="Number styles" />
      </Panel>
      <Panel className="ml-[74px]">
        <button type="button" aria-label="Paragraph Background" className="px-1">
          <FillIcon />
        </button>
        <More label="Paragraph background colors" />
      </Panel>
    </div>
    <div className="flex h-[51px] items-center pl-4 text-[28px]">
      <span className="w-[259px] shrink-0">Spacing:</span>
      <span>Indent:</span>
    </div>
    <div className="flex pl-4">
      <Panel>
        <Tool label="Increase Spacing"><SpacingIcon /></Tool>
        <Tool label="Decrease Spacing"><SpacingIcon shrink /></Tool>
      </Panel>
      <Panel className="ml-[139px]">
        <Tool label="Increase paragraph indent"><IndentIcon /></Tool>
        <Tool label="Decrease paragraph indent"><IndentIcon out /></Tool>
        <Tool label="Hanging indent"><PlusIcon /></Tool>
      </Panel>
    </div>
    <div className="mt-[33px] flex items-center pl-4">
      <MeasureIcon kind="above" />
      <Field label="Above paragraph spacing" className="ml-[34px]" />
      <Spinner label="spacing above" />
      <MeasureIcon kind="before" />
      <Field label="Before text indent" className="ml-[34px]" />
    </div>
    <div className="mt-[25px] flex items-center pl-4">
      <MeasureIcon kind="below" />
      <Field label="Below paragraph spacing" className="ml-[34px]" />
      <Spinner label="spacing below" />
      <MeasureIcon kind="after" />
      <Field label="After text indent" className="ml-[34px]" />
    </div>
    <div className="mt-[13px] flex items-center pl-4">
      <Panel className="w-[94px]">
        <Tool label="Line Spacing"><LineSpacingIcon /></Tool>
        <More label="Line spacing options" />
      </Panel>
      <div className="w-[163px] shrink-0" />
      <MeasureIcon kind="first" />
      <Field label="First line indent" className="ml-[34px]" />
    </div>
  </section>
);

const decks = [
  { label: "Properties deck", icon: <CubeIcon />, active: true },
  { label: "Styles deck", icon: <EffectsIcon />, active: false },
  { label: "Gallery deck", icon: <PictureIcon />, active: false },
  { label: "Navigator deck", icon: <NavigatorIcon />, active: false },
];

const Sidebar = () => (
  <aside className="flex w-[531px] shrink-0 border-r-2 border-b-2 border-[#d3d3d3] bg-[#efefef]">
    <div className="flex w-[18px] shrink-0 flex-col items-center justify-center border-r-2 border-l-3 border-r-[#cfcfcf] border-l-white">
      <div className="h-20 border-l-3 border-dotted border-[#b4b4b4]" />
    </div>
    <div className="mt-1 mb-1.5 ml-2 min-w-0 flex-1 overflow-hidden border-2 border-[#e2e2e2]">
      <div className="flex h-[63px] items-center pt-1 pr-2.5 pl-6">
        <h2 className={clsx(condensed, "text-[29px] font-bold")}>Properties</h2>
        <button type="button" aria-label="Close sidebar" className="ml-auto">
          <svg viewBox="0 0 20 20" className="size-5" aria-hidden="true">
            <path d="M2 1l16 18M18 1L2 19" stroke="#6b737b" strokeWidth="4" />
          </svg>
        </button>
      </div>
      <TextSection />
      <ParagraphSection />
      <SectionHeader title="Page" open={false} />
      <div className="border-t-2 border-[#e2e2e2]" />
    </div>
    <nav className="flex w-[92px] shrink-0 flex-col items-center pl-1">
      <button type="button" aria-label="Sidebar settings" className="mt-8">
        <svg viewBox="0 0 22 24" className="h-6 w-[22px]" aria-hidden="true">
          <path d="M0 2h15M0 7h15M0 13h15" stroke="#3d4660" strokeWidth="3" />
          <path d="M10 16h12l-6 7z" fill="#1d2a45" />
        </svg>
      </button>
      <div className="mt-8 mb-2 h-0.5 w-14 bg-[#dcdcdc]" />
      {decks.map(({ label, icon, active }) => (
        <button
          key={label}
          type="button"
          aria-label={label}
          className={clsx(
            "mb-2 flex size-[76px] shrink-0 items-center justify-center rounded-lg border-2",
            active ? "border-[#c0c0c0]" : "border-transparent",
          )}
        >
          {icon}
        </button>
      ))}
    </nav>
  </aside>
);

/* ---------- status bar ---------- */

const cell = "flex h-10 shrink-0 items-center border-l-2 border-[#cfcfcf] pl-2.5";

const StatusBar = () => (
  <footer className="flex h-[51px] shrink-0 items-center border-t-3 border-white bg-[#f0f0f0] pt-1.5 text-[28px]">
    <div className="w-[461px] shrink-0 pl-6">Page 1 / 1</div>
    <div className={clsx(cell, "w-[422px]")}>Default</div>
    <div className={clsx(cell, "w-[599px]")} />
    <div className={clsx(cell, "w-[113px]")}>INSRT</div>
    <div className={clsx(cell, "w-[87px]")}>STD</div>
    <div className={clsx(cell, "w-10")}>*</div>
    <div className={clsx(cell, "w-[71px]")} />
    <div className={clsx(cell, "flex-1 shrink")} />
    <div className={clsx(cell, "w-[182px] gap-3 pl-4")}>
      <button type="button" aria-label="Single page">
        <svg viewBox="0 0 24 28" className="h-7 w-6" aria-hidden="true">
          <path d="M2 2h13l7 7v17H2zM14 2v8h8" fill="#edf2f7" stroke="#8393a3" strokeWidth="2" />
        </svg>
      </button>
      <button type="button" aria-label="Multiple pages">
        <svg viewBox="0 0 48 28" className="h-7 w-12" aria-hidden="true">
          <path d="M2 2h13l7 7v17H2zM14 2v8h8M26 2h13l7 7v17H26zM38 2v8h8" fill="#c5dcf7" stroke="#1c5c9c" strokeWidth="3" />
        </svg>
      </button>
      <button type="button" aria-label="Book view">
        <svg viewBox="0 0 44 28" className="h-7 w-11" aria-hidden="true">
          <path d="M22 2h13l7 7v17H22zM34 2v8h8M22 2H9L2 9v17h20zM10 2v8H2" fill="#edf2f7" stroke="#8393a3" strokeWidth="2" />
        </svg>
      </button>
    </div>
    <div className={clsx(cell, "w-[346px] pl-3")}>
      <button type="button" aria-label="Zoom out">
        <svg viewBox="0 0 28 28" className="size-7" aria-hidden="true">
          <circle cx="14" cy="14" r="12" fill="#d3ecfb" stroke="#6f7f8b" strokeWidth="3" />
          <path d="M8 14h12" stroke="#12518a" strokeWidth="3" />
        </svg>
      </button>
      <div className="relative mx-3 flex-1">
        <svg viewBox="0 0 234 28" className="h-7 w-full" preserveAspectRatio="none" aria-hidden="true">
          <path d="M1 17v-5h233M37 1v9M37 19v8M117 1v9M117 19v8" fill="none" stroke="#8b8b8b" strokeWidth="2" />
          <path d="M3 15h231" stroke="#fff" strokeWidth="3" />
          <circle cx="165" cy="16" r="10" fill="#5b97bb" stroke="#33607e" strokeWidth="2" />
        </svg>
        <input type="range" aria-label="Zoom" min="20" max="600" defaultValue="318" className="absolute inset-0 w-full opacity-0" />
      </div>
      <button type="button" aria-label="Zoom in" className="mr-5">
        <svg viewBox="0 0 28 28" className="size-7" aria-hidden="true">
          <circle cx="14" cy="14" r="12" fill="#d3ecfb" stroke="#6f7f8b" strokeWidth="3" />
          <path d="M8 14h12M14 8v12" stroke="#12518a" strokeWidth="3" />
        </svg>
      </button>
    </div>
    <div className={clsx(cell, "w-[131px]")}>
      318%
      <svg viewBox="0 0 24 26" className="ml-auto h-[26px] w-6 self-end" aria-hidden="true">
        <path d="M0 26L24 0M9 26L24 9M18 26l6-7" stroke="#777" strokeWidth="2" />
      </svg>
    </div>
  </footer>
);

const lights = [
  { label: "Close", className: "border-[#8f1420] bg-linear-to-b from-[#f9c5c9] via-[#d8152b] to-[#ff8d93]" },
  { label: "Minimize", className: "border-[#a9651a] bg-linear-to-b from-[#ffe3b5] via-[#f09a33] to-[#fff27a]" },
  { label: "Zoom window", className: "border-[#377a2e] bg-linear-to-b from-[#cfeec9] via-[#4fae43] to-[#b6f58e]" },
];

const TitleBar = () => (
  <header className="flex h-[53px] shrink-0 items-center rounded-t-md border-b-3 border-[#555] bg-linear-to-b from-[#d0d0d0] to-[#a5a5a5] pt-1">
    <div className="flex w-40 gap-4 pl-5">
      {lights.map(({ label, className }) => (
        <button
          key={label}
          type="button"
          aria-label={label}
          className={clsx("flex size-[34px] items-center justify-center rounded-full border-2", className)}
        >
          {label === "Close" && <i className="size-3 rounded-full bg-[#7d0a18]" />}
        </button>
      ))}
    </div>
    <h1 className="flex flex-1 items-center justify-center gap-3 pr-40 text-[31px] leading-none">
      <svg viewBox="0 0 28 38" className="h-[38px] w-7" aria-hidden="true">
        <path d="M1 1h18l8 9v27H1z" fill="#e3e7ee" stroke="#c3c7ce" strokeWidth="2" />
        <path d="M2 1h16v6H2z" fill="#8ea9dc" />
        <circle cx="13" cy="24" r="6" fill="none" stroke="#b3c0dc" strokeWidth="3" />
        <path d="M19 13v17" stroke="#b3c0dc" strokeWidth="3" />
      </svg>
      Cite–a–Textbook–Chicago.doc – OpenOffice Writer
    </h1>
  </header>
);

const App = () => (
  <div className="flex h-screen flex-col bg-[#dfffbe] pt-[147px] pr-24 pb-[391px] pl-[23px] font-['DejaVu_Sans','Open_Sans',sans-serif] text-black">
    <div className="flex min-h-0 flex-1 flex-col rounded-t-md shadow-[34px_40px_90px_rgba(100,100,40,0.46)]">
      <TitleBar />
      <div className="shrink-0 border-b-3 border-[#d4d4d4] bg-[#fdfdfd]">
        <StandardBar />
        <FormattingBar />
      </div>
      <main className="flex min-h-0 flex-1 border-t-3 border-[#b8b8b8] bg-[#efefef]">
        <Editor />
        <Sidebar />
      </main>
      <StatusBar />
    </div>
  </div>
);

export default App;
